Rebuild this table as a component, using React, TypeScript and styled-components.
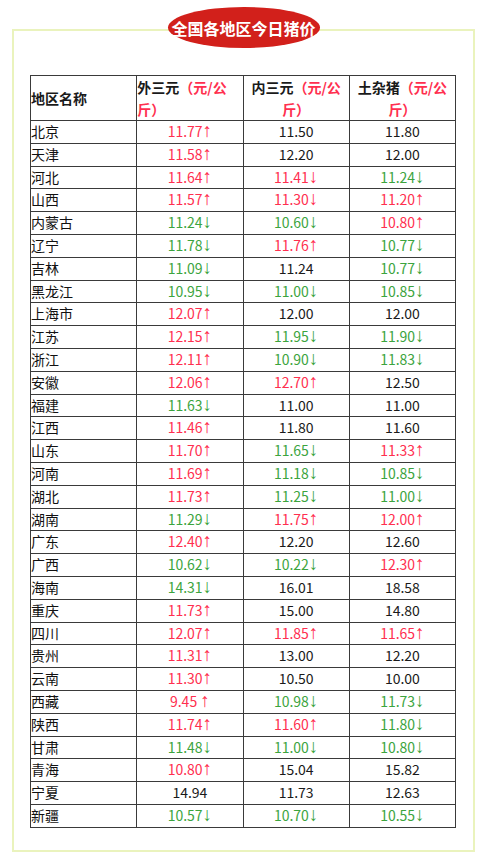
import React from "react";
import styled, { createGlobalStyle } from "styled-components";

const GlobalStyle = createGlobalStyle`
  html, body {
    margin: 0;
    padding: 0;
    background: #ffffff;
  }
  body {
    font-family: "Noto Sans CJK SC", "Noto Sans", sans-serif;
    color: #1a1a1a;
  }
`;

const Page = styled.div`
  padding: 7px 9px 11px 12px;
`;

const Frame = styled.section`
  position: relative;
  margin-top: 22px;
  border: 2px solid #eaf3bd;
  padding: 44px 17px 22px 16px;
`;

const Badge = styled.div`
  position: absolute;
  top: -24px;
  left: 50%;
  transform: translateX(-50%);
  width: 152px;
  height: 41px;
  border-radius: 50%;
  background: #d2201b;
  color: #ffffff;
  font-size: 16px;
  font-weight: 700;
  display: flex;
  align-items: center;
  justify-content: center;
  white-space: nowrap;
`;

const Table = styled.table`
  width: 100%;
  border-collapse: collapse;
  table-layout: fixed;
  font-size: 14px;
`;

const Th = styled.th<{ $align: "left" | "center" }>`
  border: 1px solid #3a3a3a;
  padding: 0;
  line-height: 22px;
  font-weight: 700;
  text-align: ${(p) => p.$align};
  vertical-align: middle;
  color: #1a1a1a;
`;

const Unit = styled.span`
  color: #ff2f4f;
`;

const NameCell = styled.td`
  border: 1px solid #3a3a3a;
  padding: 0;
  height: 21.8px;
  line-height: 21.8px;
  text-align: left;
  color: #111111;
  white-space: nowrap;
`;

type Tone = "r" | "g" | "k";

const toneColor: Record<Tone, string> = {
  r: "#ff2f4f",
  g: "#3ca43e",
  k: "#1a1a1a",
};

const ValueCell = styled.td<{ $tone: Tone }>`
  border: 1px solid #3a3a3a;
  padding: 0;
  height: 21.8px;
  line-height: 21.8px;
  text-align: center;
  color: ${(p) => toneColor[p.$tone]};
  white-space: pre;
`;

const Arrow = styled.span`
  font-family: "Liberation Sans", "DejaVu Sans", sans-serif;
  font-size: 19px;
  line-height: 0;
`;

type Row = [string, [string, Tone], [string, Tone], [string, Tone]];

const rows: Row[] = [
  ["北京", ["11.77↑", "r"], ["11.50", "k"], ["11.80", "k"]],
  ["天津", ["11.58↑", "r"], ["12.20", "k"], ["12.00", "k"]],
  ["河北", ["11.64↑", "r"], ["11.41↓", "r"], ["11.24↓", "g"]],
  ["山西", ["11.57↑", "r"], ["11.30↓", "r"], ["11.20↑", "r"]],
  ["内蒙古", ["11.24↓", "g"], ["10.60↓", "g"], ["10.80↑", "r"]],
  ["辽宁", ["11.78↓", "g"], ["11.76↑", "r"], ["10.77↓", "g"]],
  ["吉林", ["11.09↓", "g"], ["11.24", "k"], ["10.77↓", "g"]],
  ["黑龙江", ["10.95↓", "g"], ["11.00↓", "g"], ["10.85↓", "g"]],
  ["上海市", ["12.07↑", "r"], ["12.00", "k"], ["12.00", "k"]],
  ["江苏", ["12.15↑", "r"], ["11.95↓", "g"], ["11.90↓", "g"]],
  ["浙江", ["12.11↑", "r"], ["10.90↓", "g"], ["11.83↓", "g"]],
  ["安徽", ["12.06↑", "r"], ["12.70↑", "r"], ["12.50", "k"]],
  ["福建", ["11.63↓", "g"], ["11.00", "k"], ["11.00", "k"]],
  ["江西", ["11.46↑", "r"], ["11.80", "k"], ["11.60", "k"]],
  ["山东", ["11.70↑", "r"], ["11.65↓", "g"], ["11.33↑", "r"]],
  ["河南", ["11.69↑", "r"], ["11.18↓", "g"], ["10.85↓", "g"]],
  ["湖北", ["11.73↑", "r"], ["11.25↓", "g"], ["11.00↓", "g"]],
  ["湖南", ["11.29↓", "g"], ["11.75↑", "r"], ["12.00↑", "r"]],
  ["广东", ["12.40↑", "r"], ["12.20", "k"], ["12.60", "k"]],
  ["广西", ["10.62↓", "g"], ["10.22↓", "g"], ["12.30↑", "r"]],
  ["海南", ["14.31↓", "g"], ["16.01", "k"], ["18.58", "k"]],
  ["重庆", ["11.73↑", "r"], ["15.00", "k"], ["14.80", "k"]],
  ["四川", ["12.07↑", "r"], ["11.85↑", "r"], ["11.65↑", "r"]],
  ["贵州", ["11.31↑", "r"], ["13.00", "k"], ["12.20", "k"]],
  ["云南", ["11.30↑", "r"], ["10.50", "k"], ["10.00", "k"]],
  ["西藏", ["9.45 ↑", "r"], ["10.98↓", "g"], ["11.73↓", "g"]],
  ["陕西", ["11.74↑", "r"], ["11.60↑", "r"], ["11.80↓", "g"]],
  ["甘肃", ["11.48↓", "g"], ["11.00↓", "g"], ["10.80↓", "g"]],
  ["青海", ["10.80↑", "r"], ["15.04", "k"], ["15.82", "k"]],
  ["宁夏", ["14.94", "k"], ["11.73", "k"], ["12.63", "k"]],
  ["新疆", ["10.57↓", "g"], ["10.70↓", "g"], ["10.55↓", "g"]],
];

function Value({ text, tone }: { text: string; tone: Tone }) {
  const last = text.slice(-1);
  const hasArrow = last === "↑" || last === "↓";
  return (
    <ValueCell $tone={tone}>
      {hasArrow ? text.slice(0, -1) : text}
      {hasArrow && <Arrow>{last}</Arrow>}
    </ValueCell>
  );
}

function Header({ name }: { name: string }) {
  return (
    <>
      {name}
      <Unit>（元/公</Unit>
      <br />
      <Unit>斤）</Unit>
    </>
  );
}

export default function App() {
  return (
    <Page>
      <GlobalStyle />
      <Frame>
        <Badge>全国各地区今日猪价</Badge>
        <Table>
          <thead>
            <tr>
              <Th $align="left">地区名称</Th>
              <Th $align="left">
                <Header name="外三元" />
              </Th>
              <Th $align="center">
                <Header name="内三元" />
              </Th>
              <Th $align="center">
                <Header name="土杂猪" />
              </Th>
            </tr>
          </thead>
          <tbody>
            {rows.map(([name, a, b, c]) => (
              <tr key={name}>
                <NameCell>{name}</NameCell>
                <Value text={a[0]} tone={a[1]} />
                <Value text={b[0]} tone={b[1]} />
                <Value text={c[0]} tone={c[1]} />
              </tr>
            ))}
          </tbody>
        </Table>
      </Frame>
    </Page>
  );
}
